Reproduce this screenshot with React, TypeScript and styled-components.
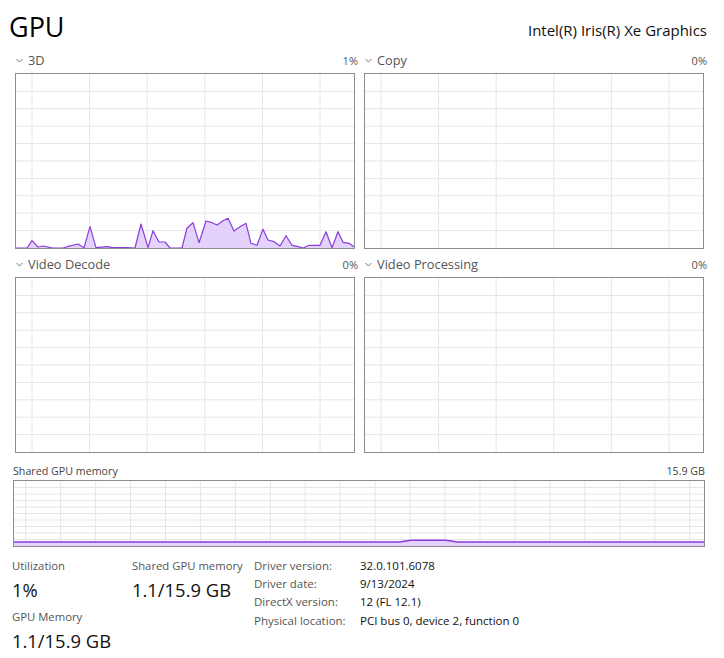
import React from 'react'
import styled, { createGlobalStyle } from 'styled-components'

const GlobalStyle = createGlobalStyle`
  html, body {
    margin: 0;
    padding: 0;
    background: #fff;
  }
`

const Page = styled.div`
  width: 724px;
  height: 658px;
  box-sizing: border-box;
  padding: 0 19px 0 13px;
  background: #fff;
  font-family: 'Open Sans', 'Noto Sans', sans-serif;
  color: #1a1a1a;
  overflow: hidden;
`

const Header = styled.div`
  height: 49px;
  display: flex;
  justify-content: space-between;
  align-items: flex-start;
`

const Title = styled.h1`
  margin: 9px 0 0 -4px;
  font-size: 27px;
  font-weight: 400;
  line-height: 36px;
  color: #000;
`

const DeviceName = styled.div`
  margin-top: 19px;
  margin-right: -2px;
  font-size: 15px;
  line-height: 22px;
  color: #111;
`

const Engines = styled.div`
  display: grid;
  grid-template-columns: 1fr 1fr;
  column-gap: 9px;
  row-gap: 4px;
  margin: 0 1px 0 2px;
`

const Panel = styled.section`
  display: flex;
  flex-direction: column;
`

const PanelHead = styled.div`
  height: 24px;
  padding-bottom: 2px;
  box-sizing: border-box;
  display: flex;
  align-items: center;
  justify-content: space-between;
  font-size: 12.8px;
  color: #555;
`

const PanelName = styled.span`
  display: flex;
  align-items: center;
  gap: 5px;
  margin-left: 1px;
`

const Percent = styled.span`
  font-size: 11px;
  margin-right: -3px;
`

const ChartBox = styled.div<{ $h: number }>`
  box-sizing: border-box;
  height: ${(p) => p.$h}px;
  border: 1px solid #8c8c8c;
  background: #fff;
  svg {
    display: block;
    width: 100%;
    height: 100%;
  }
`

const MemHead = styled.div`
  height: 27px;
  display: flex;
  align-items: flex-end;
  justify-content: space-between;
  padding-bottom: 1px;
  box-sizing: border-box;
  font-size: 10.7px;
  line-height: 16px;
  color: #444;
`

const Stats = styled.div`
  display: flex;
  margin-top: 11px;
`

const StatCols = styled.div`
  display: grid;
  grid-template-columns: 120px 122px;
  grid-auto-rows: min-content;
  margin-left: -1px;
`

const Stat = styled.div`
  display: flex;
  flex-direction: column;
  margin-bottom: 4px;
`

const StatLabel = styled.span`
  font-size: 11.3px;
  line-height: 16px;
  color: #555;
`

const StatValue = styled.span`
  font-size: 18.4px;
  line-height: 31px;
  color: #111;
`

const InfoTable = styled.div`
  display: grid;
  grid-template-columns: 106px auto;
  grid-auto-rows: 18.2px;
  font-size: 11.5px;
  line-height: 16px;
`

const InfoKey = styled.span`
  color: #555;
`

const InfoVal = styled.span`
  color: #111;
`

const LINE = '#8a3ddb'
const FILL = '#e3d2fb'
const GRID = '#e6e6e6'

const Chevron = () => (
  <svg width="7" height="5" viewBox="0 0 7 5">
    <polyline points="0.5,1 3.5,4 6.5,1" fill="none" stroke="#777" strokeWidth="1" />
  </svg>
)

type ChartProps = {
  w: number
  h: number
  colStart: number
  colStep: number
  rows: number
  points?: [number, number][]
  stroke?: number
}

function Chart({ w, h, colStart, colStep, rows, points, stroke = 1.2 }: ChartProps) {
  const cols: number[] = []
  for (let x = colStart; x < w; x += colStep) cols.push(x)
  const hs: number[] = []
  for (let k = 1; k < rows; k++) hs.push((h / rows) * k)
  const line = points ? points.map((p) => p.join(',')).join(' ') : ''
  const area = points ? `0,${h} ${line} ${w},${h}` : ''
  return (
    <svg viewBox={`0 0 ${w} ${h}`} preserveAspectRatio="none">
      {hs.map((y) => (
        <line key={'h' + y} x1={0} x2={w} y1={y} y2={y} stroke={GRID} strokeWidth={1} />
      ))}
      {cols.map((x) => (
        <line key={'v' + x} x1={x} x2={x} y1={0} y2={h} stroke={GRID} strokeWidth={1} />
      ))}
      {points && <polygon points={area} fill={FILL} />}
      {points && <polyline points={line} fill="none" stroke={LINE} strokeWidth={stroke} strokeLinejoin="round" />}
    </svg>
  )
}

const usage3d: [number, number][] = [
  [0, 174], [11, 174], [16, 166.7], [22, 173], [27, 172], [37, 174], [47, 174], [51, 172.7],
  [62, 170], [68, 173.7], [74, 152.7], [80, 173.7], [91, 172.7], [97, 173.7], [111, 173.7],
  [119, 174], [125, 150], [132, 173.7], [137, 156.7], [143, 168], [149, 168], [154, 174],
  [166, 174], [171, 154], [177, 148.7], [183, 168.7], [190, 147], [195, 148.3], [201, 151],
  [207, 146.7], [212, 144.3], [218, 157], [224, 152.7], [230, 149.3], [235, 169.3], [241, 171.3],
  [247, 155.3], [252, 166], [258, 167.7], [264, 172], [270, 161.7], [276, 171.3], [282, 172.7],
  [287, 174], [293, 171.3], [304, 171.3], [310, 157.7], [316, 173.7], [322, 157.7], [327, 168.3],
  [333, 169.3], [338, 172.7],
]

const sharedMem: [number, number][] = [
  [0, 61], [386, 61], [392, 60], [398, 59.3], [432, 59.3], [438, 60], [444, 61], [691, 61],
]

const engines = [
  { name: '3D', pct: '1%', data: usage3d },
  { name: 'Copy', pct: '0%' },
  { name: 'Video Decode', pct: '0%' },
  { name: 'Video Processing', pct: '0%' },
]

const driverInfo = [
  ['Driver version:', '32.0.101.6078'],
  ['Driver date:', '9/13/2024'],
  ['DirectX version:', '12 (FL 12.1)'],
  ['Physical location:', 'PCI bus 0, device 2, function 0'],
]

export default function App() {
  return (
    <Page>
      <GlobalStyle />
      <Header>
        <Title>GPU</Title>
        <DeviceName>Intel(R) Iris(R) Xe Graphics</DeviceName>
      </Header>

      <Engines>
        {engines.map((e) => (
          <Panel key={e.name}>
            <PanelHead>
              <PanelName>
                <Chevron />
                {e.name}
              </PanelName>
              <Percent>{e.pct}</Percent>
            </PanelHead>
            <ChartBox $h={176}>
              <Chart w={338} h={174} colStart={16} colStep={57.6} rows={10} points={e.data} />
            </ChartBox>
          </Panel>
        ))}
      </Engines>

      <MemHead>
        <span>Shared GPU memory</span>
        <span>15.9 GB</span>
      </MemHead>
      <ChartBox $h={67}>
        <Chart w={691} h={65} colStart={11.7} colStep={35} rows={10} points={sharedMem} stroke={1.6} />
      </ChartBox>

      <Stats>
        <StatCols>
          <Stat>
            <StatLabel>Utilization</StatLabel>
            <StatValue>1%</StatValue>
          </Stat>
          <Stat>
            <StatLabel>Shared GPU memory</StatLabel>
            <StatValue>1.1/15.9 GB</StatValue>
          </Stat>
          <Stat>
            <StatLabel>GPU Memory</StatLabel>
            <StatValue>1.1/15.9 GB</StatValue>
          </Stat>
        </StatCols>
        <InfoTable>
          {driverInfo.map(([k, v]) => (
            <React.Fragment key={k}>
              <InfoKey>{k}</InfoKey>
              <InfoVal>{v}</InfoVal>
            </React.Fragment>
          ))}
        </InfoTable>
      </Stats>
    </Page>
  )
}
